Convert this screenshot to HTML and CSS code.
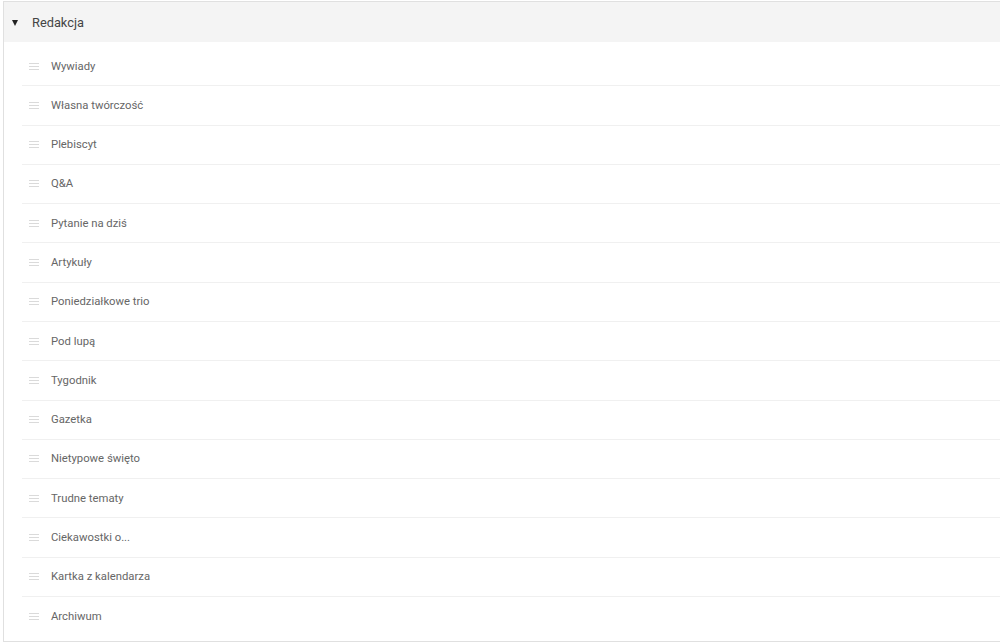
FILE: index.html
```html
<!DOCTYPE html>
<html lang="pl">
<head>
<meta charset="utf-8">
<title>Redakcja</title>
<link rel="stylesheet" href="styles.css">
</head>
<body>
<div class="panel">
  <div class="panel-header">
    <span class="caret"></span>
    <span class="title">Redakcja</span>
  </div>
  <ul class="list">
    <li class="item"><span class="handle"></span><span class="label">Wywiady</span></li>
    <li class="item"><span class="handle"></span><span class="label">Własna twórczość</span></li>
    <li class="item"><span class="handle"></span><span class="label">Plebiscyt</span></li>
    <li class="item"><span class="handle"></span><span class="label">Q&amp;A</span></li>
    <li class="item"><span class="handle"></span><span class="label">Pytanie na dziś</span></li>
    <li class="item"><span class="handle"></span><span class="label">Artykuły</span></li>
    <li class="item"><span class="handle"></span><span class="label">Poniedziałkowe trio</span></li>
    <li class="item"><span class="handle"></span><span class="label">Pod lupą</span></li>
    <li class="item"><span class="handle"></span><span class="label">Tygodnik</span></li>
    <li class="item"><span class="handle"></span><span class="label">Gazetka</span></li>
    <li class="item"><span class="handle"></span><span class="label">Nietypowe święto</span></li>
    <li class="item"><span class="handle"></span><span class="label">Trudne tematy</span></li>
    <li class="item"><span class="handle"></span><span class="label">Ciekawostki o...</span></li>
    <li class="item"><span class="handle"></span><span class="label">Kartka z kalendarza</span></li>
    <li class="item"><span class="handle"></span><span class="label">Archiwum</span></li>
  </ul>
</div>
</body>
</html>
```
FILE: styles.css
```css
html, body {
  margin: 0;
  padding: 0;
  background: #fff;
  font-family: Roboto, "Liberation Sans", sans-serif;
  overflow: hidden;
}

.panel {
  margin: 1px 0 0 3px;
  border: 1px solid #e0e0e0;
  border-right: none;
  height: 641px;
  box-sizing: border-box;
}

.panel-header {
  height: 40px;
  background: #f4f4f4;
  display: flex;
  align-items: center;
  padding-left: 8px;
}

.caret {
  width: 0;
  height: 0;
  border-left: 3.5px solid transparent;
  border-right: 3.5px solid transparent;
  border-top: 6px solid #222;
  margin-top: 2px;
}

.title {
  margin-left: 14px;
  font-size: 12.8px;
  color: #444;
}

.list {
  list-style: none;
  margin: 0;
  padding: 5px 0 0 18px;
}

.item {
  height: 38.29px;
  display: flex;
  align-items: center;
  border-bottom: 1px solid #f0f0f0;
}

.item:last-child {
  border-bottom: none;
}

.handle {
  width: 10px;
  height: 7px;
  margin-left: 7px;
  border-top: 1px solid #dadada;
  border-bottom: 1px solid #dadada;
  position: relative;
  box-sizing: border-box;
}

.handle::after {
  content: "";
  position: absolute;
  left: 0;
  right: 0;
  top: 2px;
  height: 1px;
  background: #dadada;
}

.label {
  margin-left: 12px;
  font-size: 11.3px;
  color: #666;
}
```
